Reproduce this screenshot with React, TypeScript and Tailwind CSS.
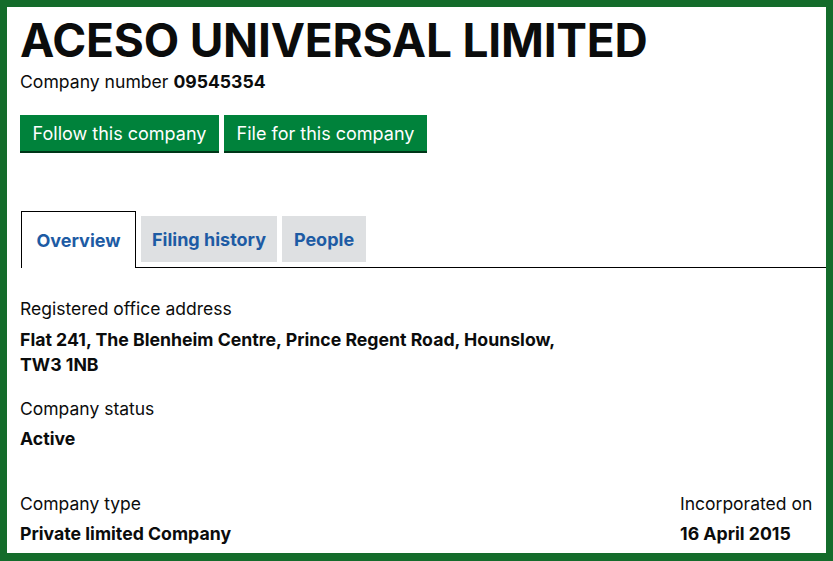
const font = { fontFamily: 'Inter, "Liberation Sans", sans-serif' };

function Tab({ label, width, active }: { label: string; width: string; active?: boolean }) {
  if (active) {
    return (
      <div className={`-mb-px flex h-[57px] items-center justify-center border border-b-0 border-black bg-white text-[18px] font-bold text-[#1d5ba4] ${width}`}>
        {label}
      </div>
    );
  }
  return (
    <div className={`mb-[5px] flex h-[46px] items-center justify-center bg-[#dee0e2] text-[18px] font-bold text-[#1d5ba4] ${width}`}>
      {label}
    </div>
  );
}

export default function App() {
  return (
    <div
      className="h-[561px] w-full overflow-hidden border-x-[7px] border-t-[7px] border-b-[8px] border-[#146c2b] bg-white pl-[13px] text-[#0b0c0c]"
      style={font}
    >
      <h1 className="mt-[7px] text-[46px] font-bold leading-[52px] tracking-[-0.2px]">ACESO UNIVERSAL LIMITED</h1>
      <p className="mt-[4px] text-[17.6px] leading-[24px]">
        Company number <strong>09545354</strong>
      </p>

      <div className="mt-[21px] flex gap-[5px]">
        <button className="h-[36px] w-[199px] bg-[#00823b] text-[18px] text-white shadow-[0_2px_0_#003618]">
          Follow this company
        </button>
        <button className="h-[36px] w-[203px] bg-[#00823b] text-[18px] text-white shadow-[0_2px_0_#003618]">
          File for this company
        </button>
      </div>

      <div className="mt-[60px] ml-px flex items-end gap-[5px] border-b border-black">
        <Tab label="Overview" width="w-[115px]" active />
        <Tab label="Filing history" width="w-[136px]" />
        <Tab label="People" width="w-[84px]" />
      </div>

      <dl className="mt-[29px] text-[17.5px]">
        <dt className="leading-[24px]">Registered office address</dt>
        <dd className="mt-[6px] w-[565px] text-[17.7px] font-bold leading-[25px]">
          Flat 241, The Blenheim Centre, Prince Regent Road, Hounslow, TW3 1NB
        </dd>

        <dt className="mt-[20px] leading-[24px]">Company status</dt>
        <dd className="mt-[5px] text-[17.7px] font-bold leading-[25px]">Active</dd>

        <div className="mt-[41px] flex justify-between">
          <div>
            <dt className="leading-[24px]">Company type</dt>
            <dd className="mt-[5px] text-[17.7px] font-bold leading-[25px]">Private limited Company</dd>
          </div>
          <div className="w-[146px] whitespace-nowrap">
            <dt className="leading-[24px]">Incorporated on</dt>
            <dd className="mt-[5px] text-[17.7px] font-bold leading-[25px]">16 April 2015</dd>
          </div>
        </div>
      </dl>
    </div>
  );
}
